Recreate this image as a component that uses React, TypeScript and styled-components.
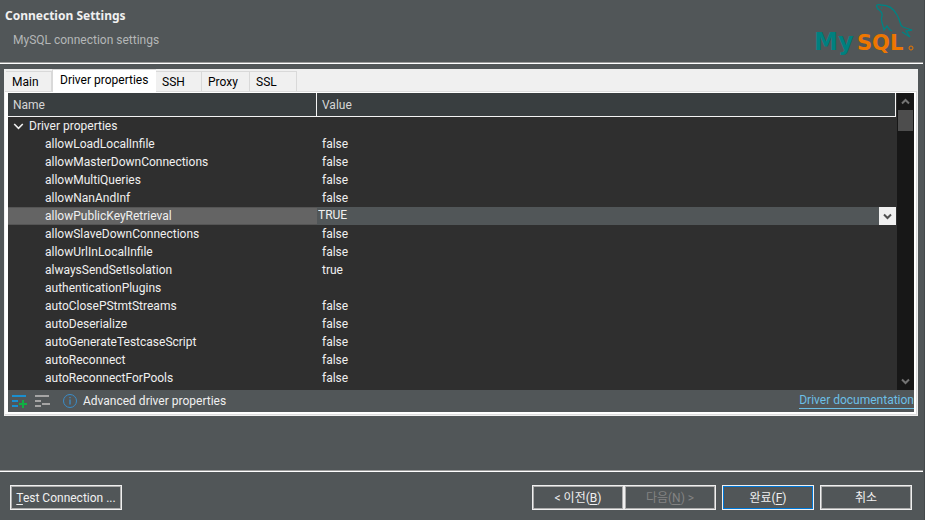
import React from "react";
import styled, { createGlobalStyle } from "styled-components";

const GlobalStyle = createGlobalStyle`
  * { box-sizing: border-box; }
  body {
    margin: 0;
    background: #515658;
    color: #f0f0f0;
    font: 12px/18px Roboto, "Noto Sans CJK KR", sans-serif;
  }
  button, input { font: inherit; color: inherit; }
`;

const Dialog = styled.div`
  min-height: 100vh;
  display: flex;
  flex-direction: column;
  border-right: 1px solid #45494b;
`;

const Header = styled.header`
  display: flex;
  justify-content: space-between;
  height: 64px;
  margin-right: 1px;
  padding-left: 5px;
  border-bottom: 1px solid #fff;
  box-shadow: inset 0 -1px #9c9c9c;
`;

const Title = styled.h1`
  margin: 7px 0 6px;
  font-family: "Noto Sans", sans-serif;
  font-size: 12px;
  line-height: 18px;
  font-weight: 700;
`;

const Subtitle = styled.p`
  margin: 0;
  padding-left: 8px;
  color: #b4b6b7;
`;

const Logo = styled.svg`
  flex: none;
  width: 110px;
  height: 60px;
`;

const Folder = styled.main`
  margin: 5px 6px 0 4px;
  border: 1px solid #f0f0f0;
  background: #f0f0f0;
`;

const Tabs = styled.div`
  display: flex;
  align-items: flex-end;
  height: 21px;
  padding-left: 1px;
`;

const Tab = styled.button<{ $width: number; $active?: boolean }>`
  width: ${(p) => p.$width}px;
  height: ${(p) => (p.$active ? 23 : 20)}px;
  flex: none;
  padding: ${(p) => (p.$active ? "0 0 2px 7px" : "0 0 0 6px")};
  margin-bottom: ${(p) => (p.$active ? "-1px" : "0")};
  border: 1px solid #d9d9d9;
  border-width: ${(p) => (p.$active ? "1px 0 0 1px" : "1px 1px 0 0")};
  background: ${(p) => (p.$active ? "#fff" : "#f0f0f0")};
  color: #000;
  text-align: left;
  white-space: nowrap;
`;

const Panel = styled.section`
  border: 1px solid #dcdcdc;
  border-width: 1px 1px 1px 0;
  background: #fff;
  padding: 1px 2px 2px 3px;
`;

const Viewport = styled.div`
  display: flex;
  height: 297px;
  background: #2f2f2f;
`;

const GridArea = styled.div`
  flex: 1;
  min-width: 0;
  overflow: hidden;
  padding-right: 1px;
`;

const Table = styled.table`
  width: 100%;
  table-layout: fixed;
  border-collapse: separate;
  border-spacing: 0;
`;

const NameColumn = styled.col`
  width: 309px;
`;

const HeadCell = styled.th`
  height: 24px;
  padding: 0 5px;
  background: #393e40;
  border-right: 1px solid #f4f4f4;
  border-bottom: 1px solid #f4f4f4;
  color: #d6d6d6;
  font-weight: 400;
  text-align: left;
`;

const Row = styled.tr<{ $selected?: boolean }>`
  height: 18px;
  background: ${(p) => (p.$selected ? "#515658" : "transparent")};
`;

const NameCell = styled.td<{ $selected?: boolean }>`
  padding: 0 0 0 37px;
  background: ${(p) => (p.$selected ? "#646464" : "transparent")};
  box-shadow: ${(p) => (p.$selected ? "inset 0 1px #555, inset 0 -1px #555" : "none")};
`;

const ValueCell = styled.td<{ $editing?: boolean }>`
  padding: ${(p) => (p.$editing ? "0" : "0 0 0 5px")};
`;

const GroupCell = styled.td`
  padding: 0 0 0 5px;
`;

const GroupToggle = styled.button`
  display: flex;
  align-items: center;
  gap: 5px;
  height: 18px;
  padding: 0;
  border: 0;
  background: none;
`;

const Editor = styled.div`
  display: flex;
  height: 18px;
`;

const EditorInput = styled.input`
  flex: 1;
  min-width: 0;
  padding: 0 0 2px 1px;
  border: 0;
  outline: 0;
  background: #515658;
`;

const DropButton = styled.button`
  display: grid;
  place-items: center;
  width: 17px;
  padding: 0;
  border: 0;
  background: #f0f0f0;
  color: #505050;
`;

const ScrollBar = styled.div`
  display: flex;
  flex-direction: column;
  width: 17px;
  background: #171717;
`;

const ScrollButton = styled.button`
  display: grid;
  place-items: center;
  height: 17px;
  padding: 0;
  border: 0;
  background: none;
  color: #737373;
`;

const Thumb = styled.div`
  height: 21px;
  margin: 0 1px;
  background: #4d4d4d;
`;

const Spring = styled.div`
  flex: 1;
`;

const ToolBar = styled.div`
  display: flex;
  align-items: center;
  height: 22px;
  padding-left: 3px;
  background: #515658;
`;

const ToolButton = styled.button`
  display: grid;
  place-items: center;
  width: 16px;
  height: 16px;
  margin-right: 7px;
  padding: 0;
  border: 0;
  background: none;
`;

const Hint = styled.span`
  display: flex;
  align-items: center;
  gap: 5px;
  margin-left: 5px;
`;

const DocLink = styled.a`
  margin-left: auto;
  line-height: 15px;
  color: #6cbfe6;
  text-decoration: none;
  border-bottom: 1px solid #6cbfe6;
`;

const Footer = styled.footer`
  display: flex;
  align-items: center;
  gap: 6px;
  height: 50px;
  margin: auto 1px 0 0;
  padding: 4px 11px 0 10px;
  border-top: 1px solid #9c9c9c;
  box-shadow: inset 0 1px #fff;
`;

const ButtonPair = styled.div`
  display: flex;
  margin-left: auto;
`;

const Button = styled.button<{ $width: number; $primary?: boolean }>`
  width: ${(p) => p.$width}px;
  height: 25px;
  padding: 0;
  border: 1px solid #f0f0f0;
  box-shadow: inset 0 0 0 1px ${(p) => (p.$primary ? "#0078d7" : "#adadad")};
  background: #515658;
  white-space: nowrap;

  &:disabled { color: #838383; }
`;

const Key = styled.span`
  text-decoration: underline;
  text-underline-offset: 2px;
`;

const Chevron = ({ up, size = 9 }: { up?: boolean; size?: number }) => (
  <svg width={size} height={size} viewBox="0 0 9 9" fill="none" stroke="currentColor" strokeWidth={size > 9 ? 1.3 : 2}>
    <path d={up ? "M1 6.5 4.5 3 8 6.5" : "M1 2.5 4.5 6 8 2.5"} />
  </svg>
);

const properties: [string, string][] = [
  ["allowLoadLocalInfile", "false"],
  ["allowMasterDownConnections", "false"],
  ["allowMultiQueries", "false"],
  ["allowNanAndInf", "false"],
  ["allowPublicKeyRetrieval", "TRUE"],
  ["allowSlaveDownConnections", "false"],
  ["allowUrlInLocalInfile", "false"],
  ["alwaysSendSetIsolation", "true"],
  ["authenticationPlugins", ""],
  ["autoClosePStmtStreams", "false"],
  ["autoDeserialize", "false"],
  ["autoGenerateTestcaseScript", "false"],
  ["autoReconnect", "false"],
  ["autoReconnectForPools", "false"],
];

const SELECTED = "allowPublicKeyRetrieval";

const tabs = [
  { label: "Main", width: 46 },
  { label: "Driver properties", width: 104, active: true },
  { label: "SSH", width: 46 },
  { label: "Proxy", width: 48 },
  { label: "SSL", width: 47 },
];

export default function App() {
  return (
    <>
      <GlobalStyle />
      <Dialog>
        <Header>
          <div>
            <Title>Connection Settings</Title>
            <Subtitle>MySQL connection settings</Subtitle>
          </div>
          <Logo viewBox="0 0 110 60" role="img" aria-label="MySQL">
            <g fontFamily="DejaVu Sans" fontWeight="700">
              <text x="1" y="50" fontSize="24" fill="#00807f">My</text>
              <text x="44" y="50" fontSize="21" fill="#ed7600">SQL</text>
            </g>
            <circle cx="98" cy="48" r="2" fill="none" stroke="#ed7600" strokeWidth="1" />
            <path
              d="M65 9C62 5 64 4 68 5C76 5 81 9 84 15C88 21 86 25 90 27L99 30L93 31L97 37L89 32M65 9C67 11 70 12 69 16C67 20 70 24 71 30L74 26C75 28 76 30 79 31M68 8h1"
              fill="none"
              stroke="#008383"
              strokeWidth="1.3"
            />
          </Logo>
        </Header>

        <Folder>
          <Tabs role="tablist">
            {tabs.map((t) => (
              <Tab key={t.label} role="tab" aria-selected={!!t.active} $width={t.width} $active={t.active}>
                {t.label}
              </Tab>
            ))}
          </Tabs>
          <Panel role="tabpanel">
            <Viewport>
              <GridArea>
                <Table>
                  <colgroup>
                    <NameColumn />
                    <col />
                  </colgroup>
                  <thead>
                    <tr>
                      <HeadCell scope="col">Name</HeadCell>
                      <HeadCell scope="col">Value</HeadCell>
                    </tr>
                  </thead>
                  <tbody>
                    <Row>
                      <GroupCell colSpan={2}>
                        <GroupToggle aria-expanded="true">
                          <Chevron size={11} />
                          Driver properties
                        </GroupToggle>
                      </GroupCell>
                    </Row>
                    {properties.map(([name, value]) => {
                      const selected = name === SELECTED;
                      return (
                        <Row key={name} $selected={selected}>
                          <NameCell $selected={selected}>{name}</NameCell>
                          <ValueCell $editing={selected}>
                            {selected ? (
                              <Editor>
                                <EditorInput aria-label={name} defaultValue={value} />
                                <DropButton aria-label="Show values">
                                  <Chevron />
                                </DropButton>
                              </Editor>
                            ) : (
                              value
                            )}
                          </ValueCell>
                        </Row>
                      );
                    })}
                  </tbody>
                </Table>
              </GridArea>
              <ScrollBar>
                <ScrollButton aria-label="Scroll up">
                  <Chevron up />
                </ScrollButton>
                <Thumb />
                <Spring />
                <ScrollButton aria-label="Scroll down">
                  <Chevron />
                </ScrollButton>
              </ScrollBar>
            </Viewport>
            <ToolBar>
              <ToolButton aria-label="Add property">
                <svg width="16" height="16" fill="none" strokeWidth="2">
                  <path d="M1 3h14M1 8h6M1 13h6" stroke="#1a8fd0" />
                  <path d="M12 7v8M8 11h8" stroke="#0fb043" />
                </svg>
              </ToolButton>
              <ToolButton aria-label="Remove property">
                <svg width="16" height="16" fill="none" stroke="#a5a5a5" strokeWidth="2">
                  <path d="M1 3h14M1 8h6M1 13h6M8 11h8" />
                </svg>
              </ToolButton>
              <Hint>
                <svg width="16" height="16" fill="none" stroke="#3a8cc8">
                  <circle cx="8" cy="8" r="6.5" />
                  <path d="M8 6.5v5M8 4v1.3" strokeWidth="1.3" />
                </svg>
                Advanced driver properties
              </Hint>
              <DocLink href="#driver-documentation">Driver documentation</DocLink>
            </ToolBar>
          </Panel>
        </Folder>

        <Footer>
          <Button $width={112}>
            <Key>T</Key>est Connection ...
          </Button>
          <ButtonPair>
            <Button $width={92}>
              &lt; 이전(<Key>B</Key>)
            </Button>
            <Button $width={92} disabled>
              다음(<Key>N</Key>) &gt;
            </Button>
          </ButtonPair>
          <Button $width={92} $primary>
            완료(<Key>F</Key>)
          </Button>
          <Button $width={92}>취소</Button>
        </Footer>
      </Dialog>
    </>
  );
}
